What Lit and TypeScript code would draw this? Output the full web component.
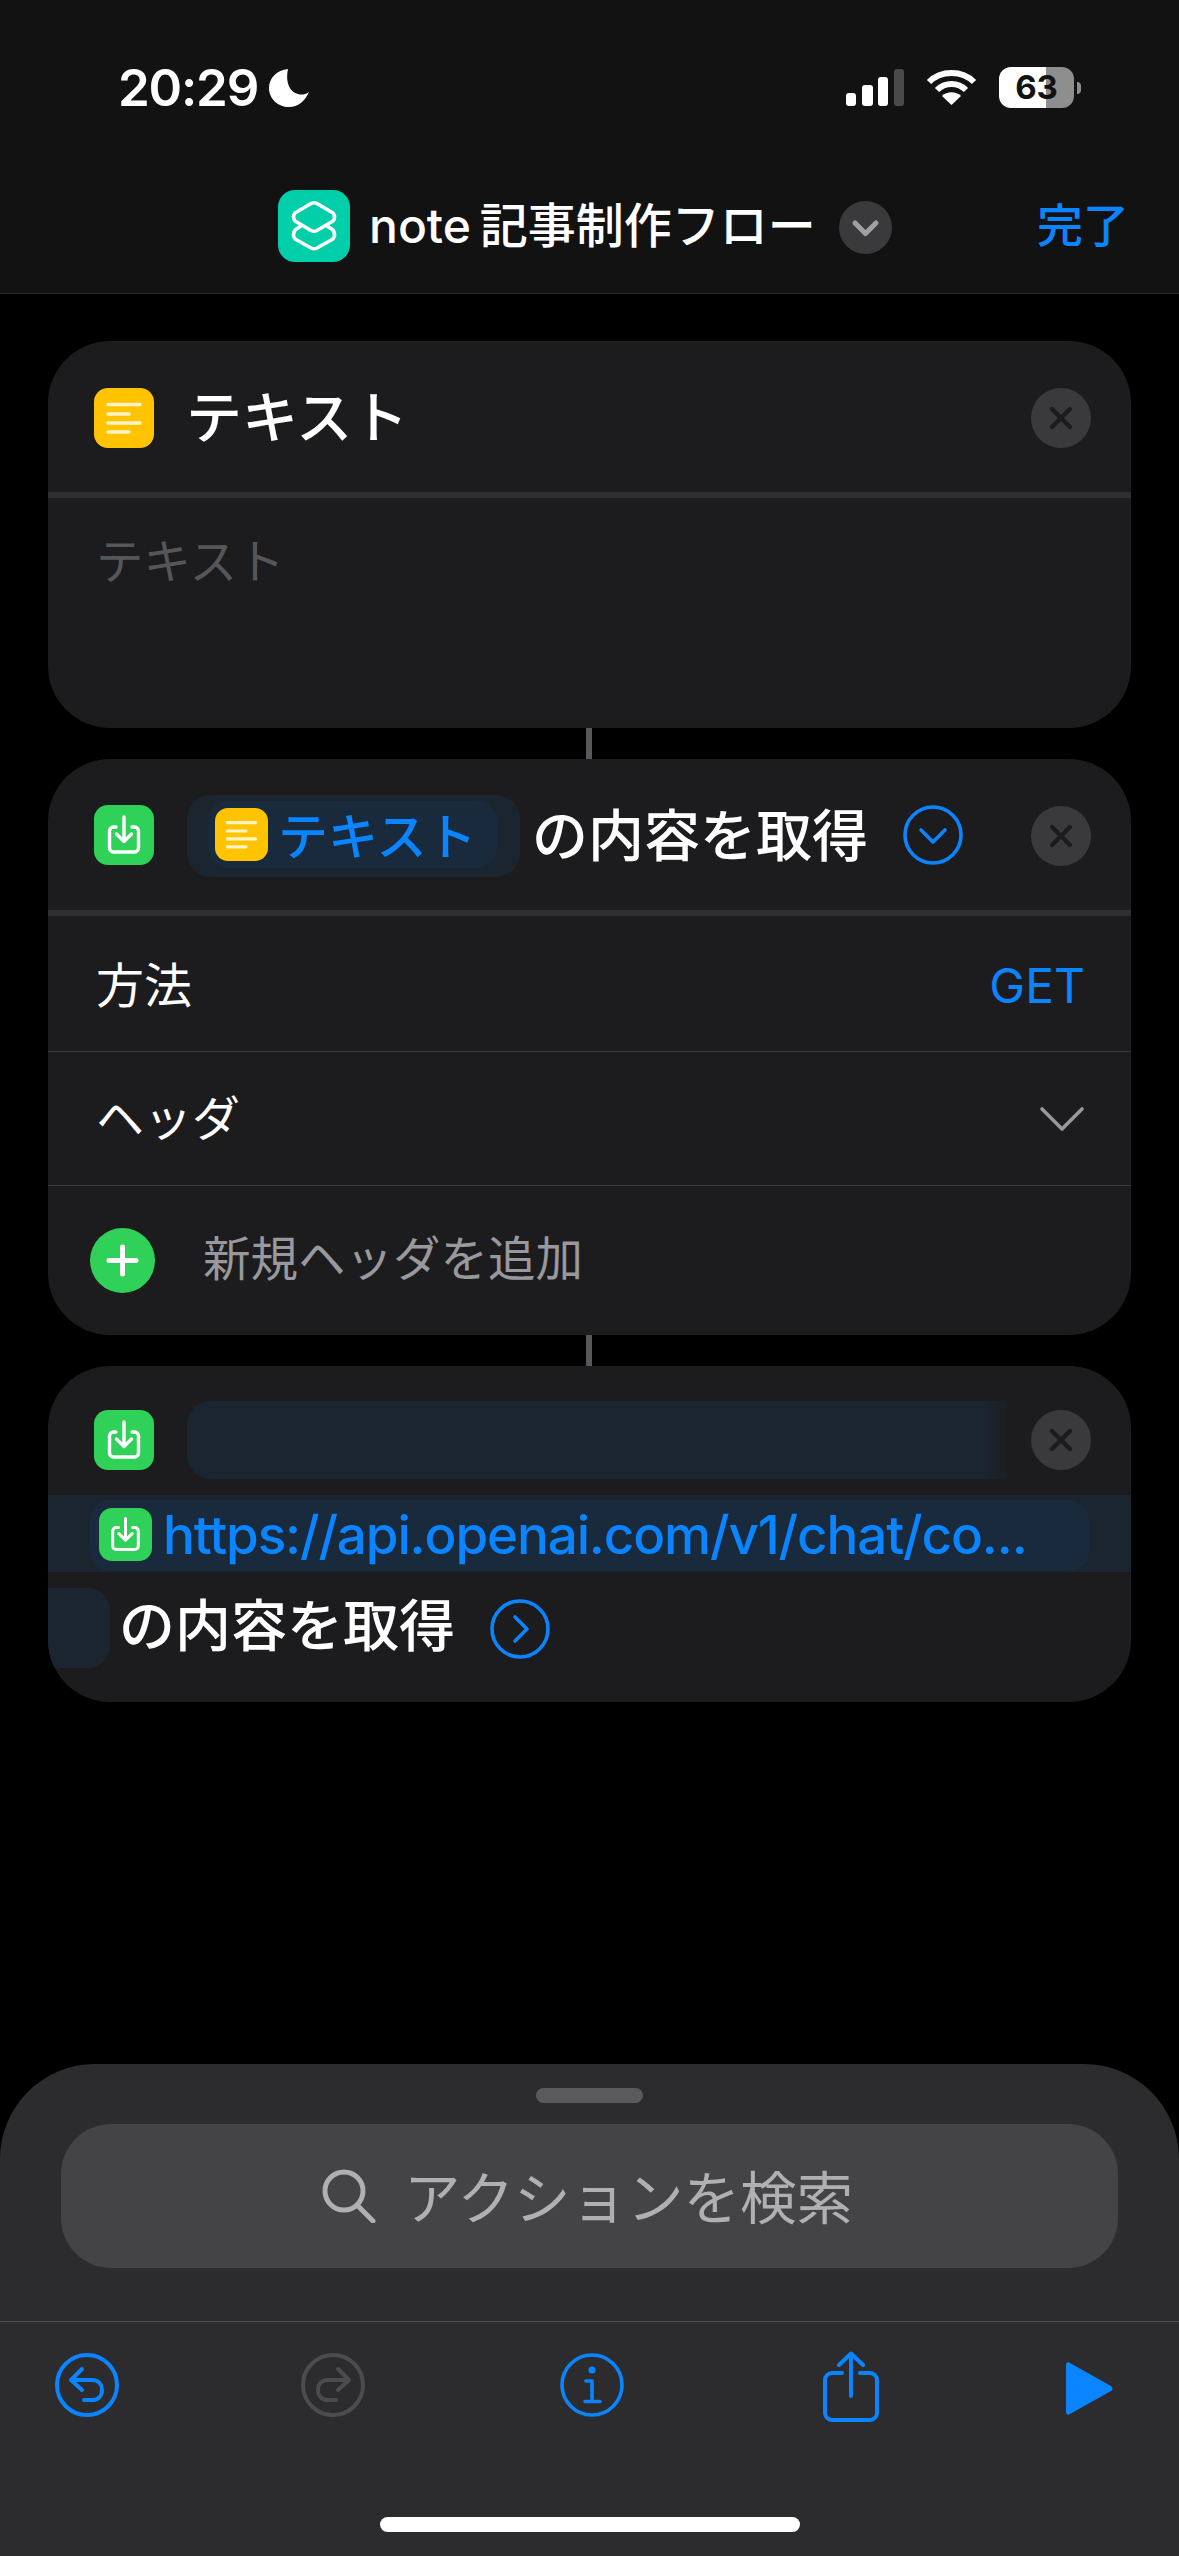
import { LitElement, html, css, svg } from 'lit';
import { customElement } from 'lit/decorators.js';

const docIcon = (cls: string) => html`
  <div class="icon yellow ${cls}">
    <svg viewBox="0 0 60 60">
      <g stroke="#fff3c8" stroke-width="3.6" stroke-linecap="round">
        <path d="M14 16.500H46M14 26H35M14 35H46M14 44H35" />
      </g>
    </svg>
  </div>
`;

const getIcon = (cls: string) => html`
  <div class="icon green ${cls}">
    <svg viewBox="0 0 60 60" fill="none" stroke="#fff" stroke-linecap="round" stroke-linejoin="round" stroke-width="3.4">
      <path d="M22 22H19.500a4 4 0 0 0-4 4V43a4 4 0 0 0 4 4H40.500a4 4 0 0 0 4-4V26a4 4 0 0 0-4-4H38" />
      <path d="M30 12V36M22.500 29L30 36.500L37.500 29" />
    </svg>
  </div>
`;

const closeBtn = html`
  <div class="close">
    <svg viewBox="0 0 60 60" fill="none" stroke="#1c1c1e" stroke-width="4.4" stroke-linecap="round">
      <path d="M21 21L39 39M39 21L21 39" />
    </svg>
  </div>
`;

const circleChevron = (d: string) => html`
  <svg class="circle-chevron" viewBox="0 0 60 60" fill="none" stroke="#0a84ff" stroke-width="3.6" stroke-linecap="round" stroke-linejoin="round">
    <circle cx="30" cy="30" r="28" />
    ${svg`<path d=${d} />`}
  </svg>
`;

@customElement('app-root')
export class AppRoot extends LitElement {
  static styles = css`
    :host {
      display: flex;
      flex-direction: column;
      width: 1179px;
      height: 2556px;
      background: #000;
      color: #fff;
      font-family: Inter, 'Noto Sans CJK JP', sans-serif;
      overflow: hidden;
    }

    /* top bars */
    .top {
      height: 293px;
      background: #121212;
      border-bottom: 1px solid #2a2a2c;
      display: flex;
      flex-direction: column;
      flex-shrink: 0;
    }

    .status {
      height: 174px;
      flex-shrink: 0;
      box-sizing: border-box;
      padding: 60px 98px 0 118px;
      display: flex;
      align-items: flex-start;
    }

    .time {
      font-size: 51px;
      line-height: 56px;
      font-weight: 600;
      letter-spacing: -1.2px;
    }

    .moon { width: 40px; height: 38px; margin: 9px 0 0 11px; }

    .status-right {
      margin-left: auto;
      display: flex;
      align-items: flex-start;
      padding-top: 7px;
    }

    .signal { width: 58px; height: 37px; margin-top: 2px; }
    .wifi { width: 51px; height: 37px; margin: 2px 0 0 22px; }

    .battery {
      position: relative;
      width: 75px;
      height: 41px;
      margin-left: 22px;
      border-radius: 12px;
      overflow: hidden;
      background: linear-gradient(90deg, #fff 0 63%, #8e8e8e 63% 100%);
      color: #121212;
      font-size: 33px;
      line-height: 41px;
      font-weight: 700;
      text-align: center;
    }

    .nub {
      width: 4px;
      height: 12px;
      margin: 15px 0 0 3px;
      background: #8e8e8e;
      border-radius: 0 4px 4px 0;
    }

    .nav {
      position: relative;
      height: 119px;
      box-sizing: border-box;
      padding: 16px 50px 0 278px;
      display: flex;
      align-items: flex-start;
    }

    .app-icon {
      width: 72px;
      height: 72px;
      border-radius: 17px;
      background: #00cfa9;
      flex-shrink: 0;
    }

    .app-icon svg { display: block; width: 100%; height: 100%; }

    .title {
      margin-left: 19px;
      font-size: 48px;
      line-height: 72px;
      font-weight: 500;
      white-space: nowrap;
      word-spacing: -4px;
    }

    .title-chevron {
      width: 53px;
      height: 53px;
      margin: 11px 0 0 23px;
      flex-shrink: 0;
    }

    .done {
      margin-left: auto;
      color: #0a84ff;
      font-size: 46px;
      line-height: 70px;
      font-weight: 500;
    }

    /* shortcut cards */
    .flow {
      flex: 1;
      box-sizing: border-box;
      padding: 47px 48px 0;
      display: flex;
      flex-direction: column;
    }

    .card {
      background: #1c1c1e;
      border-radius: 62px;
      overflow: hidden;
      flex-shrink: 0;
    }

    .link {
      width: 6px;
      height: 31px;
      background: #58585a;
      margin-left: 538px;
      flex-shrink: 0;
    }

    .head {
      display: flex;
      align-items: center;
      box-sizing: border-box;
      padding: 0 40px 0 46px;
    }

    .head.thick { border-bottom: 6px solid #2f2f31; }
    .head.h1 { height: 157px; padding-top: 3px; }
    .head.h2 { height: 157px; padding-top: 1px; }
    .h2 .close { margin-top: 2px; }

    .icon {
      width: 60px;
      height: 60px;
      border-radius: 14px;
      flex-shrink: 0;
    }

    .icon svg { display: block; width: 100%; height: 100%; }
    .yellow { background: #ffc300; }
    .green { background: #30d158; }

    .icon.small {
      width: 53px;
      height: 53px;
      border-radius: 13px;
    }

    .name {
      margin-left: 32px;
      font-size: 56px;
      line-height: 60px;
      font-weight: 500;
    }

    .close {
      width: 60px;
      height: 60px;
      border-radius: 50%;
      background: #3a3a3c;
      margin-left: auto;
      flex-shrink: 0;
    }

    .close svg { display: block; width: 100%; height: 100%; }

    .placeholder {
      height: 230px;
      box-sizing: border-box;
      padding: 34px 48px 0;
      color: #565658;
      font-size: 47.500px;
      line-height: 60px;
    }

    .token-outer {
      margin: 2px 0 0 33px;
      background: #1b2530;
      border-radius: 24px;
      padding: 6px 23px 9px 21px;
      flex-shrink: 0;
    }

    .token-inner {
      display: flex;
      align-items: center;
      width: 289px;
      height: 67px;
      box-sizing: border-box;
      padding: 0 0 0 7px;
      background: #1a2a3d;
      border-radius: 20px;
    }

    .token-text {
      margin-left: 10px;
      padding-top: 5px;
      color: #0a84ff;
      font-size: 50px;
      line-height: 60px;
      font-weight: 500;
    }

    .phrase {
      font-size: 56px;
      line-height: 60px;
      font-weight: 500;
      white-space: nowrap;
    }

    .head .phrase { margin-left: 12px; padding-top: 2px; }

    .circle-chevron {
      width: 60px;
      height: 60px;
      flex-shrink: 0;
      margin-left: 35px;
    }

    .row {
      display: flex;
      align-items: center;
      justify-content: space-between;
      box-sizing: border-box;
      padding: 0 46px 0 48px;
      font-size: 48px;
      font-weight: 400;
      line-height: 60px;
      border-bottom: 1px solid #3a3a3c;
    }

    .row.method { height: 136px; padding-top: 5px; }
    .row.headers { height: 134px; }

    .get { color: #0a84ff; font-size: 48px; }
    .row-chevron { width: 46px; height: 26px; }

    .add {
      display: flex;
      align-items: center;
      height: 149px;
      padding: 0 0 0 42px;
      box-sizing: border-box;
    }

    .plus { width: 65px; height: 65px; flex-shrink: 0; }

    .add-text {
      margin-left: 48px;
      padding-bottom: 3px;
      color: #98989d;
      font-size: 47.500px;
      line-height: 60px;
    }

    .head.h3 { height: 129px; padding-top: 18px; }

    .token-empty {
      margin-left: 33px;
      width: 820px;
      height: 78px;
      background: linear-gradient(90deg, #1b2530 0 97%, #1c1e22 100%);
      border-radius: 24px 0 0 24px;
    }

    .url-band {
      height: 77px;
      background: #1a2530;
      box-sizing: border-box;
      padding: 5px 42px 1px 42px;
    }

    .url-inner {
      display: flex;
      align-items: center;
      height: 71px;
      box-sizing: border-box;
      padding: 0 0 2px 9px;
      background: #1a2a3d;
      border-radius: 20px;
    }

    .url {
      margin-left: 11px;
      color: #0a84ff;
      font-size: 53px;
      line-height: 64px;
      font-weight: 500;
      letter-spacing: -1.150px;
      white-space: nowrap;
    }

    .tail {
      display: flex;
      align-items: flex-start;
      height: 130px;
      box-sizing: border-box;
      padding-top: 16px;
    }

    .token-end {
      width: 62px;
      height: 80px;
      background: #1b2530;
      border-radius: 0 22px 22px 0;
      flex-shrink: 0;
    }

    .tail .phrase { margin-left: 9px; line-height: 76px; }
    .tail .circle-chevron { margin: 11px 0 0 35px; }

    /* bottom sheet */
    .sheet {
      height: 492px;
      flex-shrink: 0;
      background: #2c2c2e;
      border-radius: 95px 95px 0 0;
      display: flex;
      flex-direction: column;
      align-items: center;
    }

    .handle {
      width: 107px;
      height: 15px;
      margin-top: 24px;
      background: #5a5a5c;
      border-radius: 8px;
      flex-shrink: 0;
    }

    .search {
      width: 1057px;
      height: 144px;
      box-sizing: border-box;
      padding-right: 4px;
      margin-top: 21px;
      background: #444446;
      border-radius: 50px;
      display: flex;
      align-items: center;
      justify-content: center;
      color: #b0b0b3;
      font-size: 56.500px;
      flex-shrink: 0;
    }

    .search svg { width: 54px; height: 54px; margin: 0 28px 0 0; }
    .search span { padding-bottom: 5px; }

    .tools {
      align-self: stretch;
      margin-top: 53px;
      border-top: 1px solid #4e4e50;
      padding: 31px 0 0 55px;
      display: flex;
      align-items: flex-start;
      flex-shrink: 0;
    }

    .tool { display: block; flex-shrink: 0; }
    .t-circle { width: 64px; height: 64px; }
    .t-share { width: 56px; height: 71px; margin: -2px 0 0 199px; }
    .t-play { width: 47px; height: 53px; margin: 9px 0 0 187px; }
    .redo { margin-left: 182px; }
    .info { margin-left: 195px; }

    .home {
      width: 420px;
      height: 15px;
      border-radius: 8px;
      background: #fff;
      margin-top: 95px;
      flex-shrink: 0;
    }
  `;

  render() {
    return html`
      <div class="top">
        <div class="status">
          <div class="time">20:29</div>
          <svg class="moon" viewBox="0 0 40 38">
            <path fill="#fff" d="M19 0C8 1 0 9 0 19C0 30 9 38 20 38C29 38 36 32 40 23C36 26 32 26 29 25C21 23 16 14 19 0Z" />
          </svg>
          <div class="status-right">
            <svg class="signal" viewBox="0 0 58 37">
              <rect x="0" y="24" width="10" height="13" rx="3" fill="#fff" />
              <rect x="16" y="16" width="11" height="21" rx="3" fill="#fff" />
              <rect x="32" y="8" width="10" height="29" rx="3" fill="#fff" />
              <rect x="48" y="0" width="10" height="37" rx="3" fill="#4a4a4a" />
            </svg>
            <svg class="wifi" viewBox="0 0 51 37" fill="none" stroke="#fff" stroke-width="6">
              <path d="M3 13C15 1 36 1 48 13" />
              <path d="M11 21C19 13 32 13 40 21" />
              <path fill="#fff" stroke="none" d="M25.500 36L16 27C21 22 30 22 35 27Z" />
            </svg>
            <div class="battery">63</div>
            <div class="nub"></div>
          </div>
        </div>
        <div class="nav">
          <div class="app-icon">
            <svg viewBox="0 0 72 72" fill="none" stroke="#fff" stroke-width="3.600" stroke-linejoin="round" stroke-linecap="round">
              <path d="M23 36L17 40Q14 45 17 49L33 58Q36 59.500 39 58L55 49Q58 45 55 40L49 36" />
              <path d="M33 13.500Q36 12 39 13.500L55 23Q58 27 55 31L39 40.500Q36 42 33 40.500L17 31Q14 27 17 23Z" />
            </svg>
          </div>
          <div class="title">note 記事制作フロー</div>
          <svg class="title-chevron" viewBox="0 0 53 53" fill="none">
            <circle cx="26.500" cy="26.500" r="26.500" fill="#3a3a3c" />
            <path d="M16 22L26.500 32.500L37 22" stroke="#a0a0a4" stroke-width="5" stroke-linecap="round" stroke-linejoin="round" />
          </svg>
          <div class="done">完了</div>
        </div>
      </div>

      <div class="flow">
        <div class="card">
          <div class="head h1 thick">
            ${docIcon('')}
            <div class="name">テキスト</div>
            ${closeBtn}
          </div>
          <div class="placeholder">テキスト</div>
        </div>
        <div class="link"></div>
        <div class="card">
          <div class="head h2 thick">
            ${getIcon('')}
            <div class="token-outer">
              <div class="token-inner">
                ${docIcon('small')}
                <div class="token-text">テキスト</div>
              </div>
            </div>
            <div class="phrase">の内容を取得</div>
            ${circleChevron('M18 25L30 37L42 25')}
            ${closeBtn}
          </div>
          <div class="row method"><span>方法</span><span class="get">GET</span></div>
          <div class="row headers">
            <span>ヘッダ</span>
            <svg class="row-chevron" viewBox="0 0 46 26" fill="none" stroke="#98989d" stroke-width="3.600" stroke-linecap="round" stroke-linejoin="round">
              <path d="M3 3L23 23L43 3" />
            </svg>
          </div>
          <div class="add">
            <svg class="plus" viewBox="0 0 65 65">
              <circle cx="32.500" cy="32.500" r="32.500" fill="#30d158" />
              <path d="M32.500 19V46M19 32.500H46" stroke="#fff" stroke-width="5" stroke-linecap="round" />
            </svg>
            <div class="add-text">新規ヘッダを追加</div>
          </div>
        </div>
        <div class="link"></div>
        <div class="card">
          <div class="head h3">
            ${getIcon('')}
            <div class="token-empty"></div>
            ${closeBtn}
          </div>
          <div class="url-band">
            <div class="url-inner">
              ${getIcon('small')}
              <div class="url">https://api.openai.com/v1/chat/co...</div>
            </div>
          </div>
          <div class="tail">
            <div class="token-end"></div>
            <div class="phrase">の内容を取得</div>
            ${circleChevron('M25 18L37 30L25 42')}
          </div>
        </div>
      </div>

      <div class="sheet">
        <div class="handle"></div>
        <div class="search">
          <svg viewBox="0 0 54 54" fill="none" stroke="#b0b0b3" stroke-width="5" stroke-linecap="round">
            <circle cx="22" cy="22" r="19" />
            <path d="M35 36L51 52" />
          </svg>
          <span>アクションを検索</span>
        </div>
        <div class="tools">
          <svg class="tool t-circle" viewBox="0 0 64 64" fill="none" stroke="#0a84ff" stroke-width="4" stroke-linecap="round" stroke-linejoin="round">
            <circle cx="32" cy="32" r="30" />
            <path d="M27 16L16 27L27 37M16 27H37C44 27 47 32 47 37C47 43 43 47 37 47H29" />
          </svg>
          <svg class="tool t-circle redo" viewBox="0 0 64 64" fill="none" stroke="#4c4c4e" stroke-width="4" stroke-linecap="round" stroke-linejoin="round">
            <circle cx="32" cy="32" r="30" />
            <path d="M37 16L48 27L37 37M48 27H27C20 27 17 32 17 37C17 43 21 47 27 47H35" />
          </svg>
          <svg class="tool t-circle info" viewBox="0 0 64 64" fill="none" stroke="#0a84ff" stroke-width="3.600" stroke-linecap="round" stroke-linejoin="round">
            <circle cx="32" cy="32" r="30" />
            <circle cx="32" cy="17" r="3.600" fill="#0a84ff" stroke="none" />
            <path d="M26 28H32V48M25 48.500H40" />
          </svg>
          <svg class="tool t-share" viewBox="0 0 56 71" fill="none" stroke="#0a84ff" stroke-width="4" stroke-linecap="round" stroke-linejoin="round">
            <path d="M19 22H9A7 7 0 0 0 2 29V62A7 7 0 0 0 9 69H47A7 7 0 0 0 54 62V29A7 7 0 0 0 47 22H37" />
            <path d="M28 45V3M16 14L28 2.500L40 14" />
          </svg>
          <svg class="tool t-play" viewBox="0 0 47 53">
            <path fill="#0a84ff" d="M0 3C0 .5 2 -.5 4 1L45 24C47 25.500 47 27.500 45 29L4 52C2 53.500 0 52.500 0 50Z" />
          </svg>
        </div>
        <div class="home"></div>
      </div>
    `;
  }
}
